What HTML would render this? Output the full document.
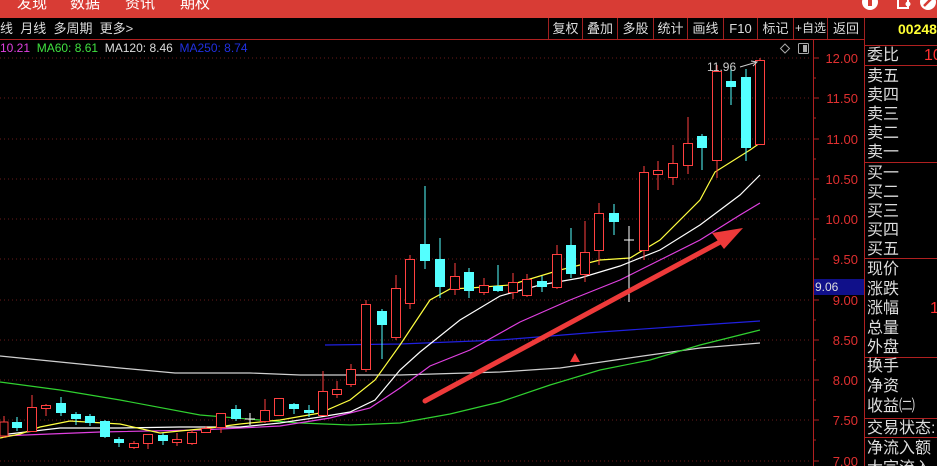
<!DOCTYPE html>
<html><head><meta charset="utf-8">
<style>
*{margin:0;padding:0;box-sizing:border-box}
html,body{width:937px;height:466px;background:#000;overflow:hidden}
body{position:relative;font-family:"Liberation Sans","Noto Sans CJK SC",sans-serif}
.hdr{position:absolute;left:0;top:0;width:937px;height:18px;background:#d83c35;overflow:hidden}
.hdr span{position:absolute;top:-8px;color:#fff;font-size:15px}
.tb{position:absolute;top:18px;height:21px;color:#ddd;font-size:13px;line-height:21px}
.btn{position:absolute;top:18px;height:21px;border-left:1px solid #a02020;color:#ddd;font-size:13px;line-height:21px;text-align:center}
.rp{position:absolute;left:867px;color:#ddd;font-size:16px;line-height:19.5px;white-space:nowrap}
.hl{position:absolute;left:865px;width:72px;height:1px;background:#b02020}
</style></head><body>
<div class="hdr">
<span style="left:17px">发现</span><span style="left:70px">数据</span><span style="left:125px">资讯</span><span style="left:180px">期权</span>
<svg width="937" height="18" style="position:absolute;left:0;top:0">
<circle cx="870" cy="2" r="8" fill="#fff"/><rect x="868" y="-2" width="4" height="8" fill="#d83c35"/>
<path d="M898 -2 h10 v10 h-10z" fill="none" stroke="#fff" stroke-width="2"/><circle cx="908" cy="4" r="2.5" fill="#fff"/>
<circle cx="928" cy="2" r="8" fill="#fff"/><path d="M924 6 L932 -2" stroke="#d83c35" stroke-width="2.5"/>
</svg>
</div>
<div class="tb" style="left:0">线&nbsp;&nbsp;月线&nbsp;&nbsp;多周期&nbsp;&nbsp;更多&gt;</div>
<div class="btn" style="left:548px;width:34px">复权</div>
<div class="btn" style="left:582px;width:35px">叠加</div>
<div class="btn" style="left:617px;width:36px">多股</div>
<div class="btn" style="left:653px;width:34px">统计</div>
<div class="btn" style="left:687px;width:36px">画线</div>
<div class="btn" style="left:723px;width:34px">F10</div>
<div class="btn" style="left:757px;width:36px">标记</div>
<div class="btn" style="left:793px;width:34px;font-size:12px">+自选</div>
<div class="btn" style="left:827px;width:38px;border-right:1px solid #a02020">返回</div>
<div style="position:absolute;left:898px;top:21px;color:#ffff33;font-size:14px;font-weight:bold">00248</div>
<div style="position:absolute;left:0;top:39px;width:865px;height:1px;background:#b02020"></div>
<div style="position:absolute;left:0;top:41px;font-size:12px;white-space:nowrap">
<span style="color:#e040e0">10.21</span>&nbsp;&nbsp;<span style="color:#40e040">MA60: 8.61</span>&nbsp;&nbsp;<span style="color:#ddd">MA120: 8.46</span>&nbsp;&nbsp;<span style="color:#2030e0">MA250: 8.74</span></div>
<svg width="937" height="466" style="position:absolute;left:0;top:0">
<g stroke="#6a1a1a" stroke-dasharray="1,3" stroke-width="1">
<line x1="0" y1="58" x2="812" y2="58"/><line x1="0" y1="98" x2="812" y2="98"/><line x1="0" y1="139" x2="812" y2="139"/><line x1="0" y1="179" x2="812" y2="179"/><line x1="0" y1="219" x2="812" y2="219"/><line x1="0" y1="259" x2="812" y2="259"/><line x1="0" y1="300" x2="812" y2="300"/><line x1="0" y1="340" x2="812" y2="340"/><line x1="0" y1="380" x2="812" y2="380"/><line x1="0" y1="420" x2="812" y2="420"/><line x1="0" y1="461" x2="812" y2="461"/>
</g>
<line x1="813.5" y1="40" x2="813.5" y2="466" stroke="#b02020"/>
<line x1="864.5" y1="40" x2="864.5" y2="466" stroke="#b02020"/>
<g stroke="#b02020">
<line x1="813" y1="58" x2="819" y2="58"/><line x1="813" y1="98" x2="819" y2="98"/><line x1="813" y1="139" x2="819" y2="139"/><line x1="813" y1="179" x2="819" y2="179"/><line x1="813" y1="219" x2="819" y2="219"/><line x1="813" y1="259" x2="819" y2="259"/><line x1="813" y1="300" x2="819" y2="300"/><line x1="813" y1="340" x2="819" y2="340"/><line x1="813" y1="380" x2="819" y2="380"/><line x1="813" y1="420" x2="819" y2="420"/><line x1="813" y1="461" x2="819" y2="461"/>
<line x1="813" y1="78" x2="816" y2="78"/><line x1="813" y1="118" x2="816" y2="118"/><line x1="813" y1="159" x2="816" y2="159"/><line x1="813" y1="199" x2="816" y2="199"/><line x1="813" y1="239" x2="816" y2="239"/><line x1="813" y1="280" x2="816" y2="280"/><line x1="813" y1="320" x2="816" y2="320"/><line x1="813" y1="360" x2="816" y2="360"/><line x1="813" y1="400" x2="816" y2="400"/><line x1="813" y1="440" x2="816" y2="440"/>
</g>
<g fill="#e03030" font-size="13" text-anchor="end" font-family="Liberation Sans,sans-serif">
<text x="858" y="63">12.00</text><text x="858" y="103">11.50</text><text x="858" y="144">11.00</text><text x="858" y="184">10.50</text><text x="858" y="224">10.00</text><text x="858" y="264">9.50</text><text x="858" y="305">9.00</text><text x="858" y="345">8.50</text><text x="858" y="385">8.00</text><text x="858" y="425">7.50</text><text x="858" y="466">7.00</text>
</g>
<rect x="814" y="279" width="50" height="16" fill="#10108a"/>
<text x="815" y="291" fill="#ddd" font-size="12">9.06</text>
<path d="M785 44 l4.5 4.5 l-4.5 4.5 l-4.5 -4.5z" fill="none" stroke="#aaa"/>
<rect x="798.5" y="43.5" width="10" height="10" rx="1" fill="none" stroke="#aaa"/><rect x="803" y="45" width="4" height="7" fill="#aaa"/>
<g fill="none" stroke-width="1.2">
<polyline stroke="#d0d0d0" points="0,356 60,362 120,368 175,373 250,373 300,375 400,375 500,372 560,368 650,355 700,348 760,343"/>
<polyline stroke="#30d030" points="0,382 60,390 120,400 200,415 260,420 300,423 350,425 400,423 450,414 500,402 550,385 600,370 650,360 700,345 740,335 760,330"/>
<polyline stroke="#2020e0" points="325,345 400,344 500,340 600,332 700,325 760,321"/>
<polyline stroke="#e040e0" points="0,436 100,432 200,430 280,426 330,418 370,408 400,388 430,366 470,350 520,322 570,300 620,280 670,255 700,240 740,215 760,203"/>
<polyline stroke="#ffffff" points="0,435 60,428 120,428 180,427 240,427 280,423 320,417 350,412 375,400 400,370 420,352 460,320 500,296 540,285 580,278 620,266 660,250 700,225 740,195 760,175"/>
<polyline stroke="#ffff40" points="0,438 20,434 40,427 70,421 120,424 160,433 210,428 240,424 280,420 320,413 350,400 375,380 400,345 430,300 450,289 470,288 510,285 560,270 600,260 630,258 660,240 700,200 715,172 750,150 760,143"/>
</g>
<g stroke-width="1">
<g stroke="#ff4040">
<line x1="4" y1="416" x2="4" y2="438"/><line x1="32" y1="395" x2="32" y2="431"/><line x1="46" y1="404" x2="46" y2="416"/><line x1="134" y1="441" x2="134" y2="449"/><line x1="148" y1="434" x2="148" y2="449"/><line x1="177" y1="433" x2="177" y2="446"/><line x1="192" y1="430" x2="192" y2="445"/><line x1="206" y1="426" x2="206" y2="433"/><line x1="221" y1="413" x2="221" y2="433"/><line x1="265" y1="399" x2="265" y2="423"/><line x1="279" y1="398" x2="279" y2="415"/><line x1="323" y1="371" x2="323" y2="416"/><line x1="337" y1="381" x2="337" y2="398"/><line x1="351" y1="364" x2="351" y2="387"/><line x1="366" y1="300" x2="366" y2="372"/><line x1="396" y1="275" x2="396" y2="340"/><line x1="410" y1="255" x2="410" y2="309"/><line x1="455" y1="263" x2="455" y2="295"/><line x1="484" y1="278" x2="484" y2="295"/><line x1="513" y1="273" x2="513" y2="299"/><line x1="527" y1="274" x2="527" y2="297"/><line x1="557" y1="245" x2="557" y2="289"/><line x1="585" y1="221" x2="585" y2="282"/><line x1="599" y1="203" x2="599" y2="265"/><line x1="644" y1="166" x2="644" y2="260"/><line x1="658" y1="161" x2="658" y2="190"/><line x1="673" y1="145" x2="673" y2="185"/><line x1="688" y1="117" x2="688" y2="174"/><line x1="717" y1="65" x2="717" y2="178"/><line x1="760" y1="58" x2="760" y2="144"/>
</g>
<g stroke="#54ffff">
<line x1="17" y1="417" x2="17" y2="431"/><line x1="61" y1="397" x2="61" y2="416"/><line x1="76" y1="412" x2="76" y2="425"/><line x1="90" y1="414" x2="90" y2="426"/><line x1="105" y1="420" x2="105" y2="438"/><line x1="119" y1="437" x2="119" y2="447"/><line x1="163" y1="433" x2="163" y2="445"/><line x1="236" y1="405" x2="236" y2="421"/><line x1="294" y1="403" x2="294" y2="414"/><line x1="309" y1="405" x2="309" y2="417"/><line x1="382" y1="309" x2="382" y2="359"/><line x1="425" y1="186" x2="425" y2="269"/><line x1="440" y1="238" x2="440" y2="298"/><line x1="469" y1="268" x2="469" y2="298"/><line x1="498" y1="265" x2="498" y2="292"/><line x1="542" y1="276" x2="542" y2="292"/><line x1="571" y1="228" x2="571" y2="278"/><line x1="614" y1="204" x2="614" y2="235"/><line x1="702" y1="134" x2="702" y2="170"/><line x1="731" y1="67" x2="731" y2="105"/><line x1="746" y1="69" x2="746" y2="161"/>
</g>
<g stroke="#fff"><line x1="250" y1="413" x2="250" y2="425"/><line x1="245" y1="419" x2="255" y2="419"/><line x1="629" y1="226" x2="629" y2="302"/><line x1="624" y1="240" x2="634" y2="240"/></g>
</g>
<g fill="#000" stroke="#ff4040">
<rect x="0" y="422" width="8" height="14"/><rect x="27.5" y="407.5" width="9" height="24"/><rect x="41.5" y="405.5" width="9" height="3"/><rect x="129.5" y="443.5" width="9" height="4"/><rect x="143.5" y="434.5" width="9" height="9"/><rect x="172.5" y="439.5" width="9" height="3"/><rect x="187.5" y="432.5" width="9" height="11"/><rect x="201.5" y="428.5" width="9" height="4"/><rect x="216.5" y="413.5" width="9" height="14"/><rect x="260.5" y="410.5" width="9" height="11"/><rect x="274.5" y="398.5" width="9" height="17"/><rect x="318.5" y="391.5" width="9" height="24"/><rect x="332.5" y="389.5" width="9" height="5"/><rect x="346.5" y="369.5" width="9" height="15"/><rect x="361.5" y="304.5" width="9" height="65"/><rect x="391.5" y="288.5" width="9" height="49"/><rect x="405.5" y="259.5" width="9" height="44"/><rect x="450.5" y="276.5" width="9" height="13"/><rect x="479.5" y="285.5" width="9" height="7"/><rect x="508.5" y="282.5" width="9" height="10"/><rect x="522.5" y="279.5" width="9" height="16"/><rect x="552.5" y="254.5" width="9" height="33"/><rect x="580.5" y="252.5" width="9" height="22"/><rect x="594.5" y="213.5" width="9" height="37"/><rect x="639.5" y="172.5" width="9" height="78"/><rect x="653.5" y="170.5" width="9" height="4"/><rect x="668.5" y="163.5" width="9" height="14"/><rect x="683.5" y="143.5" width="9" height="22"/><rect x="712.5" y="71.5" width="9" height="89"/><rect x="755.5" y="60.5" width="9" height="84"/>
</g>
<g fill="#54ffff">
<rect x="12" y="422" width="10" height="6"/><rect x="56" y="403" width="10" height="10"/><rect x="71" y="414" width="10" height="5"/><rect x="85" y="416" width="10" height="7"/><rect x="100" y="421" width="10" height="16"/><rect x="114" y="439" width="10" height="4"/><rect x="158" y="435" width="10" height="6"/><rect x="231" y="409" width="10" height="10"/><rect x="289" y="404" width="10" height="5"/><rect x="304" y="410" width="10" height="3"/><rect x="377" y="311" width="10" height="14"/><rect x="420" y="244" width="10" height="17"/><rect x="435" y="259" width="10" height="28"/><rect x="464" y="272" width="10" height="19"/><rect x="493" y="286" width="10" height="5"/><rect x="537" y="281" width="10" height="6"/><rect x="566" y="245" width="10" height="29"/><rect x="609" y="213" width="10" height="9"/><rect x="697" y="136" width="10" height="12"/><rect x="726" y="81" width="10" height="6"/><rect x="741" y="77" width="10" height="71"/>
</g>
<text x="707" y="71" fill="#ccc" font-size="12">11.96</text>
<path d="M740 67 L757 62 M751 61 L757 62 L753 66" stroke="#ccc" fill="none"/>
<path d="M425 401 L722 241" stroke="#ee3a3a" stroke-width="5" stroke-linecap="round"/>
<path d="M743 228 L712 233 L724 249z" fill="#ee3a3a"/>
<path d="M575 353 L580 362 L570 362z" fill="#ee3a3a"/>
</svg>
<div class="hl" style="top:45px"></div>
<div class="hl" style="top:65px"></div>
<div class="hl" style="top:162px"></div>
<div class="hl" style="top:258px"></div>
<div class="hl" style="top:357px"></div>
<div class="hl" style="top:418px"></div>
<div class="hl" style="top:437px"></div>
<div class="rp" style="top:46px">委比</div>
<div style="position:absolute;left:924px;top:46px;color:#ff3030;font-size:16px;line-height:19px">10</div>
<div class="rp" style="top:67px;line-height:19px">卖五<br>卖四<br>卖三<br>卖二<br>卖一</div>
<div class="rp" style="top:164px;line-height:19px">买一<br>买二<br>买三<br>买四<br>买五</div>
<div class="rp" style="top:260px">现价<br>涨跌<br>涨幅<br>总量<br>外盘</div>
<div style="position:absolute;left:930px;top:299px;color:#ff3030;font-size:16px;line-height:19px">1</div>
<div class="rp" style="top:357px;line-height:20px">换手<br>净资<br>收益㈡</div>
<div class="rp" style="top:420px;line-height:17px">交易状态:</div>
<div class="rp" style="top:439px">净流入额<br>大宗流入</div>
</body></html>
